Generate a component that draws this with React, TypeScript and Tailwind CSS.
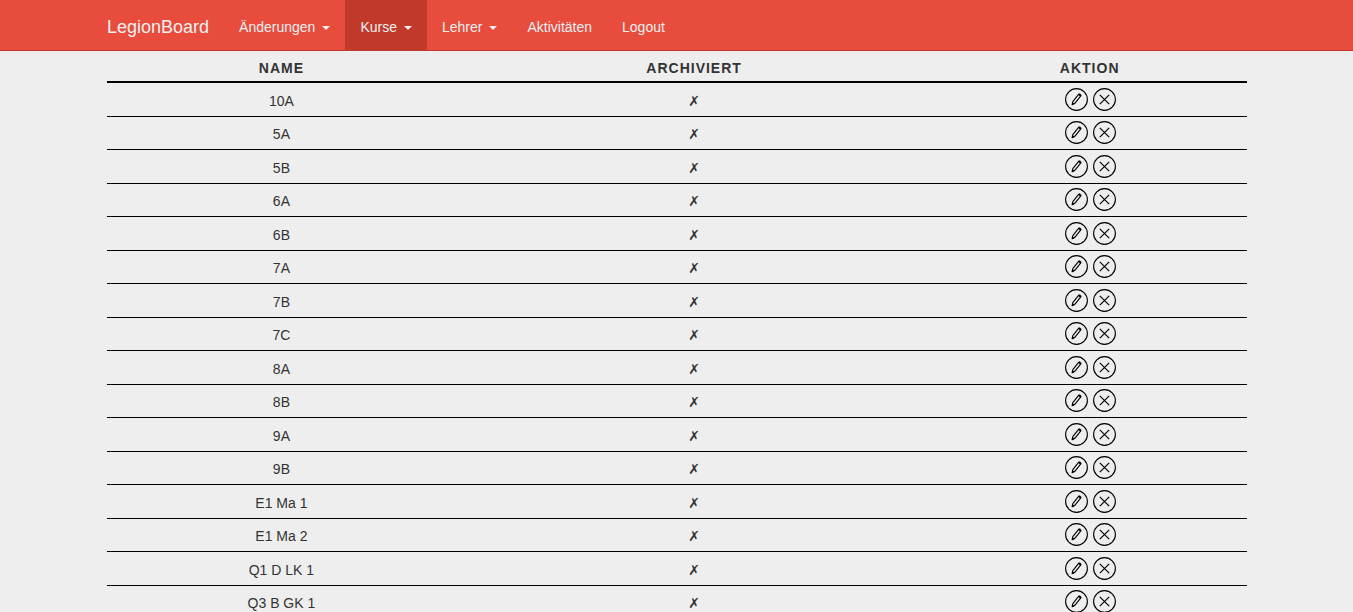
const courses = [
  '10A', '5A', '5B', '6A', '6B', '7A', '7B', '7C', '8A', '8B', '9A', '9B',
  'E1 Ma 1', 'E1 Ma 2', 'Q1 D LK 1', 'Q3 B GK 1',
];

const navItems = [
  { label: 'Änderungen', menu: true, active: false },
  { label: 'Kurse', menu: true, active: true },
  { label: 'Lehrer', menu: true, active: false },
  { label: 'Aktivitäten', menu: false, active: false },
  { label: 'Logout', menu: false, active: false },
];

function Caret() {
  return (
    <svg className="ml-[7px] mt-0.5 h-1 w-2" viewBox="0 0 8 4" aria-hidden="true">
      <path d="M0 0h8L4 4z" fill="currentColor" />
    </svg>
  );
}

function EditIcon() {
  return (
    <svg className="block size-6" viewBox="0 0 24 24" fill="none" stroke="#000" aria-hidden="true">
      <circle cx="12.5" cy="12.5" r="10.9" strokeWidth="1.1" />
      <path d="M8.2 17.7l.6-3 6-7.5 2 1.6-6 7.5z" strokeWidth="1.1" strokeLinejoin="round" />
      <path d="M14.4 7.6l.5-.6q.6-.5 1.2 0l.7.5q.5.6.1 1.2l-.5.6z" fill="#000" strokeWidth=".6" />
      <path d="M8.2 17.7l.4-2 1.5 1.2z" fill="#000" strokeWidth=".6" />
    </svg>
  );
}

function DeleteIcon() {
  return (
    <svg className="block size-6" viewBox="0 0 24 24" fill="none" stroke="#000" aria-hidden="true">
      <circle cx="12.5" cy="12.5" r="10.9" strokeWidth="1.1" />
      <path d="M7.8 7.8l9.4 9.4M17.2 7.8l-9.4 9.4" strokeWidth="1.2" />
    </svg>
  );
}

export default function App() {
  return (
    <div className="min-h-screen bg-[#eeeeee] font-['Liberation_Sans',Arial,sans-serif] text-sm text-[#333333]">
      <header className="border-b border-[#c0392b] bg-[#e74c3c] text-[#ecf0f1]">
        <nav className="mx-auto flex max-w-[1171px] flex-wrap pl-px" aria-label="Navigation">
          <a href="#" className="flex h-[50px] items-center px-[15px] pt-1 text-lg">LegionBoard</a>
          <ul className="flex flex-wrap">
            {navItems.map((item) => (
              <li key={item.label}>
                <a
                  href="#"
                  aria-current={item.active ? 'page' : undefined}
                  className={`flex h-[50px] items-center px-[15px] pt-1 ${item.active ? 'bg-[#c0392b]' : ''}`}
                >
                  {item.label}
                  {item.menu && <Caret />}
                </a>
              </li>
            ))}
          </ul>
        </nav>
      </header>
      <main className="mx-auto max-w-[1171px] pl-4 pr-[15px]">
        <table className="w-full table-fixed border-separate border-spacing-0 text-center">
          <thead>
            <tr className="h-8 uppercase tracking-[1px]">
              <th scope="col" className="w-[30.6%] border-b-2 border-black pt-1">Name</th>
              <th scope="col" className="w-[41.8%] border-b-2 border-black pt-1">Archiviert</th>
              <th scope="col" className="border-b-2 border-black pt-1">Aktion</th>
            </tr>
          </thead>
          <tbody>
            {courses.map((name) => (
              <tr key={name} className="odd:h-[34px] even:h-[33px]">
                <td className="border-b border-black pt-0.5">{name}</td>
                <td className="border-b border-black pt-0.5 font-['Liberation_Sans','DejaVu_Sans',sans-serif]">✗</td>
                <td className="border-b border-black pb-0.5">
                  <div className="flex justify-center gap-1">
                    <button type="button" aria-label={`${name} bearbeiten`}><EditIcon /></button>
                    <button type="button" aria-label={`${name} löschen`}><DeleteIcon /></button>
                  </div>
                </td>
              </tr>
            ))}
          </tbody>
        </table>
      </main>
    </div>
  );
}
